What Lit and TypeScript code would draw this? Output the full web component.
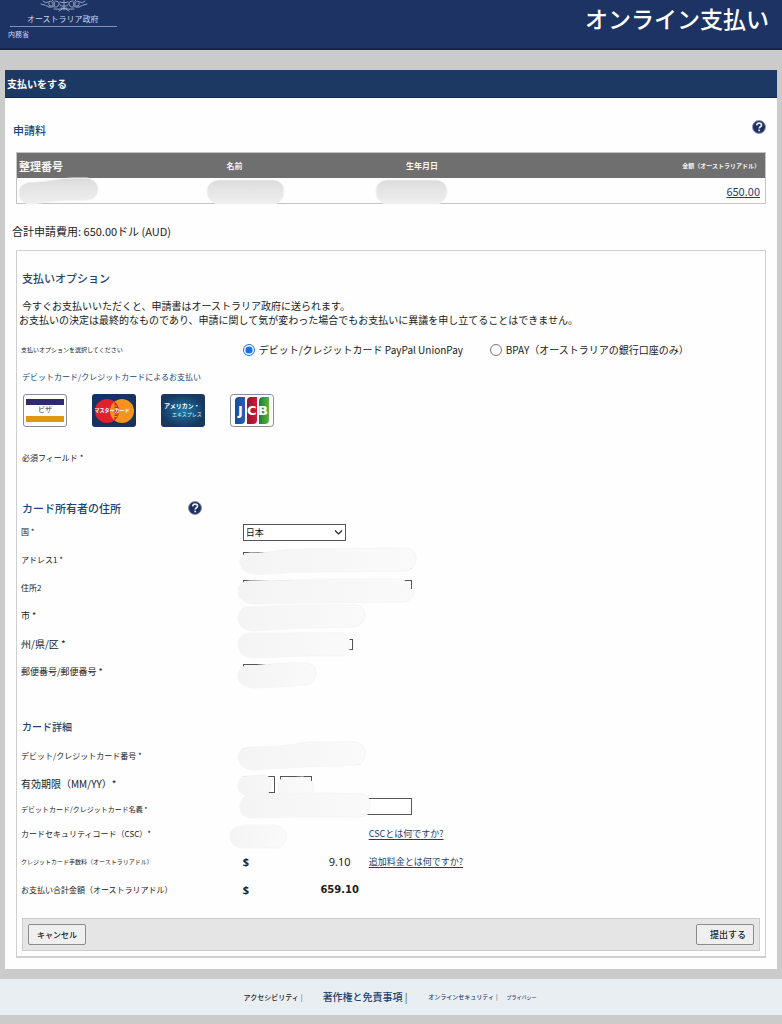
import { LitElement, html, svg, css } from "lit";
import { customElement, property, state } from "lit/decorators.js";

@customElement("help-button")
class HelpButton extends LitElement {
  @property() label = "ヘルプ";

  static styles = css`
    :host { display: inline-flex; }
    .help {
      appearance: none;
      border: 0;
      padding: 0;
      background: none;
      display: block;
      width: 14px;
      height: 14px;
      cursor: pointer;
    }
    .help svg { display: block; }
  `;

  render() {
    return html`<button class="help" type="button" aria-label=${this.label}>
      <svg width="14" height="14" viewBox="0 0 14 14" aria-hidden="true">
        <circle cx="7" cy="7" r="6.5" fill="#1d2f5e" stroke="#8d99b8" stroke-width="1" />
        <path d="M4.7 5.4C4.8 3.9 5.8 3.2 7.1 3.2C8.5 3.2 9.5 4 9.5 5.2C9.5 6.8 7.2 6.8 7.2 8.6"
          fill="none" stroke="#e6ebf7" stroke-width="1.7" />
        <rect x="6.3" y="9.6" width="1.8" height="1.7" fill="#e6ebf7" />
      </svg>
    </button>`;
  }
}

/** Brush stroke that masks a personal value; its path starts from the left middle of the cell. */
const mask = (d: string, tone: "strong" | "soft" = "soft") => html`
  <svg class="mask ${tone}" width="1" height="1" aria-hidden="true">
    <defs>
      <linearGradient id="soft-fill">
        <stop offset="0" stop-color="#f4f4f4" />
        <stop offset="1" stop-color="#fafafa" />
      </linearGradient>
      <linearGradient id="strong-fill" x2="0" y2="1">
        <stop offset="0" stop-color="#dadada" />
        <stop offset="0.3" stop-color="#e3e3e3" />
        <stop offset="1" stop-color="#efefef" />
      </linearGradient>
    </defs>
    ${svg`<path d=${d} />`}
  </svg>
`;

interface Field {
  id: string;
  label: string;
  size: "s7" | "s8" | "s9" | "s10";
  width: "full" | "mid" | "state" | "short";
  stroke: string;
}

const ADDRESS: Field[] = [
  { id: "address1", label: "アドレス1 *", size: "s8", width: "full",
    stroke: "M-3 1C-3 -4 2 -7 9 -7C24 -6 36 -11 56 -11L162 -12C168 -12 173 -7 173 -2C173 5 168 11 162 11L64 12C44 12 26 15 12 14C2 14 -3 8 -3 1Z" },
  { id: "address2", label: "住所2", size: "s8", width: "full",
    stroke: "M-5 3C-5 -3 0 -7 8 -7L94 -9L152 -9C158 -9 164 -8 165 -2L171 4C170 12 164 14 158 14L60 15L10 16C0 15 -5 9 -5 3Z" },
  { id: "city", label: "市 *", size: "s9", width: "mid",
    stroke: "M-5 2C-5 -5 0 -10 8 -9L60 -11L108 -11C116 -12 122 -8 122 -1C122 6 116 11 108 11L60 12L10 15C0 14 -5 9 -5 2Z" },
  { id: "state", label: "州/県/区 *", size: "s10", width: "state",
    stroke: "M-5 1C-5 -6 0 -11 8 -11L60 -11L100 -11L106 -5L106 8L100 12L60 12L10 14C0 13 -5 8 -5 1Z" },
  { id: "postcode", label: "郵便番号/郵便番号 *", size: "s9", width: "short",
    stroke: "M-5 4C-5 -3 0 -7 8 -6L40 -9L62 -9C69 -9 73 -5 73 1C73 9 68 13 60 13L34 15L10 16C0 15 -5 10 -5 4Z" },
];

@customElement("app-root")
class AppRoot extends LitElement {
  @state() private method = "card";

  static styles = css`
    :host {
      display: block;
      min-height: 100vh;
      background: #cbcbcb;
      color: #222;
      font-family: "Noto Sans CJK JP", "Noto Sans", sans-serif;
      font-size: 10px;
      line-height: 20px;
    }
    * { box-sizing: border-box; }
    h1, h2, p, ul { margin: 0; padding: 0; font-weight: 400; }
    a { color: #1d3f6e; }

    .top {
      display: flex;
      justify-content: space-between;
      align-items: flex-start;
      height: 50px;
      background: #1c3363;
      border-bottom: 2px solid #17234f;
      color: #fff;
    }
    .brand { width: 117px; padding-left: 8px; color: #ced6e8; }
    .crest { display: block; margin-left: 32px; }
    .gov {
      font-size: 8px;
      line-height: 14px;
      margin-left: 2px;
      padding-left: 17px;
      border-bottom: 1px solid #8390b2;
    }
    .dept { font-size: 7px; line-height: 15px; }
    .service { font-size: 23px; line-height: 36px; font-weight: 500; padding-right: 13px; }

    .page { margin: 20px 5px 0; background: #fefefe; padding-bottom: 11px; }
    .title {
      background: #1b3962;
      border-bottom: 1px solid #14264d;
      color: #fff;
      font-size: 10px;
      line-height: 27px;
      font-weight: 700;
      padding-left: 2px;
    }
    .fee-head {
      display: flex;
      justify-content: space-between;
      padding: 22px 11px 12px 8px;
    }
    .heading { color: #1c4474; font-size: 11px; font-weight: 500; }
    .heading.small { font-size: 10px; }

    .fees { margin: 0 11px; border: 1px solid #c4c4c4; }
    table { width: 100%; border-collapse: collapse; table-layout: fixed; }
    th {
      background: #6f6f6f;
      color: #f4f4f4;
      text-align: left;
      font-weight: 700;
      padding: 0 2px;
      height: 25px;
      line-height: 24px;
    }
    td { position: relative; height: 25px; padding: 0 5px; }
    .c-ref { width: 28%; font-size: 11px; }
    .c-name { width: 24%; font-size: 8px; padding-left: 0; }
    .c-dob { width: 23%; font-size: 8px; padding-left: 0; }
    .c-amt { text-align: right; font-size: 6px; padding-right: 5px; }
    .amt { text-align: right; font-size: 11px; }

    .total { padding: 17px 8px 9px 7px; font-size: 11px; color: #1c1c1c; }

    .panel {
      margin: 0 11px;
      border: 1px solid #cfcfcf;
      border-bottom-width: 2px;
      padding: 17px 5px 5px;
    }
    .notice { padding-top: 11px; line-height: 14px; color: #1a1a1a; }
    .notice .follow { margin-left: -3px; }

    .row {
      display: grid;
      grid-template-columns: 30% 1fr;
      align-items: center;
      margin-left: -1px;
      min-height: 28px;
    }
    .row.options { margin-top: 9px; }
    .row.tight { min-height: 22px; }
    .row.tight .control { align-items: flex-start; }
    .control {
      position: relative;
      display: flex;
      align-items: center;
      height: 100%;
      min-height: 16px;
    }
    .s6 { font-size: 6px; }
    .s7 { font-size: 7px; }
    .s8 { font-size: 8px; }
    .s9 { font-size: 9px; }
    .s10 { font-size: 10px; }

    .choices { display: grid; grid-template-columns: 247px auto; justify-content: start; }
    .choice { display: flex; align-items: center; gap: 4px; }
    input[type="radio"] { width: 12px; height: 12px; margin: 0; accent-color: #1a6fe0; }

    .by-card { color: #1c4474; font-size: 8px; padding-top: 3px; }
    .cards { display: flex; gap: 25px; list-style: none; padding: 7px 1px 21px; }
    .cards svg { display: block; }
    .required { font-size: 8px; }
    .holder { display: flex; align-items: center; padding-top: 30px; gap: 67px; }
    .details { padding: 31px 0 5px; }

    input[type="text"], select {
      appearance: none;
      border: 1px solid #555;
      border-radius: 0;
      background: #fff;
      height: 17px;
      padding: 0 2px;
      margin: 0;
      font: inherit;
      line-height: 15px;
      color: #111;
    }
    .pick { position: relative; display: inline-flex; }
    .pick select { width: 103px; font-size: 9px; }
    .pick svg { position: absolute; right: 3px; top: 5px; pointer-events: none; }
    .full { width: 169px; }
    .mid { width: 116px; }
    input[type="text"].state { width: 110px; height: 11px; }
    .short { width: 66px; }
    .dates { display: flex; gap: 5px; }
    .month, .year { width: 32px; }
    input[type="text"].csc { width: 34px; border-color: #fafafa; }

    .mask {
      position: absolute;
      left: 0;
      top: 50%;
      overflow: visible;
      pointer-events: none;
    }
    .mask.soft { fill: url(#soft-fill); stroke: #f5f5f5; stroke-width: 1; }
    .mask.strong { fill: url(#strong-fill); stroke: #f3f3f3; stroke-width: 1; }

    .split { display: grid; grid-template-columns: 77px 40px auto; }
    .split a { margin-left: 9px; font-size: 9px; text-underline-offset: 2px; }
    .money { text-align: center; font-family: "Noto Sans", sans-serif; font-size: 11px; }
    .strong-money { font-family: "DejaVu Sans", sans-serif; font-weight: 700; font-size: 10px; text-align: center; }
    .currency { font-family: "Noto Sans", sans-serif; font-weight: 700; font-size: 11px; }

    .actions {
      display: flex;
      justify-content: space-between;
      align-items: center;
      margin-top: 14px;
      padding: 5px;
      background: #e5e5e5;
      border: 1px solid #cbcbcb;
    }
    .action {
      width: 58px;
      height: 21px;
      border: 1px solid #8b8b8b;
      border-radius: 2px;
      background: #efefef;
      color: #222;
      font: inherit;
      font-weight: 500;
      line-height: 16px;
      padding: 0;
    }
    .action.cancel { font-size: 8px; }
    .action.submit { font-size: 9px; padding-left: 6px; }

    footer {
      margin-top: 10px;
      height: 36px;
      background: #e9eef3;
      display: flex;
      justify-content: center;
      align-items: center;
      padding-right: 2px;
    }
    footer a { text-decoration: none; font-weight: 500; }
    .bar { color: #445; margin-left: 2px; }
    .f1 { font-size: 7px; margin-right: 20px; }
    .f1 a { color: #222; }
    .f2 { font-size: 10px; margin-right: 21px; }
    .f3 { font-size: 6px; margin-right: 9px; }
    .f4 { font-size: 5px; }
  `;

  private crest() {
    return html`<svg class="crest" width="48" height="12" viewBox="0 0 48 12" role="img" aria-label="紋章">
      <g fill="none" stroke="#9aa6c6" stroke-width="1" stroke-linecap="round">
        <path d="M3 1q2 3 5 1q3-2 5 1q1 3-3 3q-2-1-1-3M1 4q5 1 8 3M12 0q4 3 2 6q-2 2-5 1M15 1q5 0 4 4q-2 3-5 2" />
        <path d="M45 1q-2 3-5 1q-3-2-5 1q-1 3 3 3q2-1 1-3M47 4q-5 1-8 3M36 0q-4 3-2 6q2 2 5 1M33 1q-5 0-4 4q2 3 5 2" />
        <path d="M24 0v10M20 2q4 2 8 0M20 5q4 3 8 0M14 9q6 1 10-1q4 2 10 1M19 11l5-3l5 3M21 8q3 2 6 0" />
      </g>
    </svg>`;
  }

  private brandCards() {
    return html`<ul class="cards">
      <li>
        <svg width="44" height="33" viewBox="0 0 44 33" role="img" aria-label="ビザ">
          <rect x=".5" y=".5" width="43" height="32" rx="2.5" fill="#fdfdfd" stroke="#8b8b9b" />
          <rect x="3" y="5" width="38" height="6" fill="#2f2b69" />
          <rect x="3" y="22" width="38" height="6" fill="#e3960e" />
          <text x="22" y="18" font-size="7" text-anchor="middle" fill="#333">ビザ</text>
        </svg>
      </li>
      <li>
        <svg width="44" height="33" viewBox="0 0 44 33" role="img" aria-label="マスターカード">
          <rect width="44" height="33" rx="3" fill="#16325f" />
          <circle cx="15" cy="17" r="12" fill="#e1202b" />
          <circle cx="30" cy="17" r="12" fill="#f6921e" />
          <path d="M22.5 7.6A12 12 0 0 1 22.5 26.4Z" fill="#e1202b" />
          <path d="M22 12h3M22 14.5h4M22 20h4M22 22.5h3" stroke="#f6921e" />
          <text x="20" y="18" font-size="5" font-weight="700" text-anchor="middle" fill="#fff">マスターカード</text>
        </svg>
      </li>
      <li>
        <svg width="44" height="33" viewBox="0 0 44 33" role="img" aria-label="アメリカン・エキスプレス">
          <defs>
            <radialGradient id="amex">
              <stop offset="0" stop-color="#187ba9" />
              <stop offset="1" stop-color="#183761" />
            </radialGradient>
          </defs>
          <rect width="44" height="33" rx="3" fill="url(#amex)" />
          <text x="3" y="14" font-size="6" font-weight="700" fill="#fff">アメリカン・</text>
          <text x="11" y="22" font-size="5" fill="#e3eff7">エキスプレス</text>
        </svg>
      </li>
      <li>
        <svg width="44" height="33" viewBox="0 0 44 33" role="img" aria-label="JCB">
          <defs>
            <linearGradient id="blue"><stop offset="0" stop-color="#174b9b" /><stop offset="1" stop-color="#2460ad" /></linearGradient>
            <linearGradient id="red"><stop offset="0" stop-color="#8e1738" /><stop offset="1" stop-color="#d81635" /></linearGradient>
            <linearGradient id="green"><stop offset="0" stop-color="#187d3b" /><stop offset="1" stop-color="#5fb536" /></linearGradient>
          </defs>
          <rect x=".5" y=".5" width="43" height="32" rx="3" fill="#fff" stroke="#8b8b9b" />
          <path d="M5 7q0-4 4-4h6v23q0 4-4 4H5z" fill="url(#blue)" />
          <path d="M17 7q0-4 4-4h6v23q0 4-4 4h-6z" fill="url(#red)" />
          <path d="M29 7q0-4 4-4h6v23q0 4-4 4h-6z" fill="url(#green)" />
          <g fill="#fff" font-family="'DejaVu Sans', sans-serif" font-weight="700" font-size="13">
            <text x="8" y="21">J</text><text x="17" y="21">C</text><text x="28" y="21">B</text>
          </g>
        </svg>
      </li>
    </ul>`;
  }

  render() {
    return html`
      <header class="top">
        <div class="brand">
          ${this.crest()}
          <div class="gov">オーストラリア政府</div>
          <div class="dept">内務省</div>
        </div>
        <div class="service">オンライン支払い</div>
      </header>

      <main class="page">
        <h1 class="title">支払いをする</h1>
        <div class="fee-head">
          <h2 class="heading">申請料</h2>
          <help-button label="申請料のヘルプ"></help-button>
        </div>
        <div class="fees">
          <table>
            <thead>
              <tr>
                <th class="c-ref">整理番号</th>
                <th class="c-name">名前</th>
                <th class="c-dob">生年月日</th>
                <th class="c-amt">金額（オーストラリアドル）</th>
              </tr>
            </thead>
            <tbody>
              <tr>
                <td>${mask("M2 2C2 -6 8 -9 17 -9C30 -9 42 -13 55 -13L70 -13C77 -12 81 -7 81 -2C81 4 77 9 70 9L40 10L14 13C7 13 2 9 2 2Z", "strong")}</td>
                <td>${mask("M-19 0C-19 -7 -13 -11 -6 -11H46C54 -11 58 -6 58 0C58 7 54 13 46 13H-6C-14 13 -19 7 -19 0Z", "strong")}</td>
                <td>${mask("M-30 0C-30 -7 -25 -11 -18 -11H29C37 -11 41 -6 41 0C41 7 37 13 29 13H-18C-26 13 -30 7 -30 0Z", "strong")}</td>
                <td class="amt"><a href="#amount">650.00</a></td>
              </tr>
            </tbody>
          </table>
        </div>
        <p class="total">合計申請費用: 650.00ドル (AUD)</p>

        <form class="panel" @submit=${(e: Event) => e.preventDefault()}>
          <h2 class="heading">支払いオプション</h2>
          <div class="notice">
            <p>今すぐお支払いいただくと、申請書はオーストラリア政府に送られます。</p>
            <p class="follow">お支払いの決定は最終的なものであり、申請に関して気が変わった場合でもお支払いに異議を申し立てることはできません。</p>
          </div>

          <div class="row options" role="radiogroup" aria-labelledby="method-label">
            <span class="s6" id="method-label">支払いオプションを選択してください</span>
            <div class="choices">
              <label class="choice">
                <input type="radio" name="method" .checked=${this.method === "card"} @change=${() => (this.method = "card")} />
                デビット/クレジットカード PayPal UnionPay
              </label>
              <label class="choice">
                <input type="radio" name="method" .checked=${this.method === "bpay"} @change=${() => (this.method = "bpay")} />
                BPAY（オーストラリアの銀行口座のみ）
              </label>
            </div>
          </div>
          <p class="by-card">デビットカード/クレジットカードによるお支払い</p>
          ${this.brandCards()}
          <p class="required">必須フィールド *</p>

          <div class="holder">
            <h2 class="heading">カード所有者の住所</h2>
            <help-button label="住所のヘルプ"></help-button>
          </div>
          <div class="row">
            <label class="s8" for="country">国 *</label>
            <div class="control">
              <span class="pick">
                <select id="country"><option>日本</option></select>
                <svg width="9" height="7" viewBox="0 0 9 7" aria-hidden="true">
                  <path d="M1 1.5L4.5 5L8 1.5" fill="none" stroke="#222" stroke-width="1.2" />
                </svg>
              </span>
            </div>
          </div>
          ${ADDRESS.map((f) => html`
            <div class="row">
              <label class=${f.size} for=${f.id}>${f.label}</label>
              <div class="control">
                <input type="text" class=${f.width} id=${f.id} />
                ${mask(f.stroke)}
              </div>
            </div>`)}

          <h2 class="heading small details">カード詳細</h2>
          <div class="row">
            <label class="s8" for="number">デビット/クレジットカード番号 *</label>
            <div class="control">
              <input type="text" class="mid" id="number" />
              ${mask("M-5 1C-5 -5 0 -9 8 -9L40 -10L66 -14L110 -14C118 -14 122 -9 122 -3C122 5 118 10 110 9L60 11L10 14C0 13 -5 8 -5 1Z")}
            </div>
          </div>
          <div class="row">
            <label class="s10" for="month">有効期限（MM/YY）*</label>
            <div class="control">
              <div class="dates">
                <input type="text" class="month" id="month" />
                <input type="text" class="year" id="year" aria-label="有効期限（年）" />
              </div>
              ${mask("M-5 2C-5 -4 -2 -8 4 -8L22 -9C26 -8 28 -4 28 2C28 6 26 10 20 11H4C-2 11 -5 7 -5 2ZM35 2C35 -4 39 -6 44 -6L60 -7C65 -5 70 -4 70 2V13H42C37 12 35 8 35 2Z")}
            </div>
          </div>
          <div class="row tight">
            <label class="s7" for="name">デビットカード/クレジットカード名義 *</label>
            <div class="control">
              <input type="text" class="full" id="name" />
              ${mask("M-3 -2C-3 -10 2 -14 9 -15L80 -16L118 -15C124 -15 127 -11 127 -3C127 4 124 8 116 8L60 8L10 9C2 9 -3 5 -3 -2Z")}
            </div>
          </div>
          <div class="row">
            <label class="s8" for="csc">カードセキュリティコード（CSC）*</label>
            <div class="control">
              <div class="split">
                <input type="text" class="csc" id="csc" />
                <span></span>
                <a href="#csc-help">CSCとは何ですか?</a>
              </div>
              ${mask("M-13 3C-13 -4 -8 -8 0 -8H32C39 -8 43 -4 43 2C43 9 39 14 32 14H0C-8 14 -13 9 -13 3Z")}
            </div>
          </div>
          <div class="row">
            <span class="s6">クレジットカード手数料（オーストラリアドル）</span>
            <div class="control">
              <div class="split">
                <span class="currency">$</span>
                <span class="money">9.10</span>
                <a href="#fee-help">追加料金とは何ですか?</a>
              </div>
            </div>
          </div>
          <div class="row">
            <span class="s8">お支払い合計金額（オーストラリアドル）</span>
            <div class="control">
              <div class="split">
                <span class="currency">$</span>
                <span class="strong-money">659.10</span>
              </div>
            </div>
          </div>

          <div class="actions">
            <button class="action cancel" type="button">キャンセル</button>
            <button class="action submit" type="submit">提出する</button>
          </div>
        </form>
      </main>

      <footer>
        <span class="f1"><a href="#accessibility">アクセシビリティ</a><span class="bar">|</span></span>
        <span class="f2"><a href="#copyright">著作権と免責事項</a><span class="bar">|</span></span>
        <span class="f3"><a href="#security">オンラインセキュリティ</a><span class="bar">|</span></span>
        <span class="f4"><a href="#privacy">プライバシー</a></span>
      </footer>
    `;
  }
}
